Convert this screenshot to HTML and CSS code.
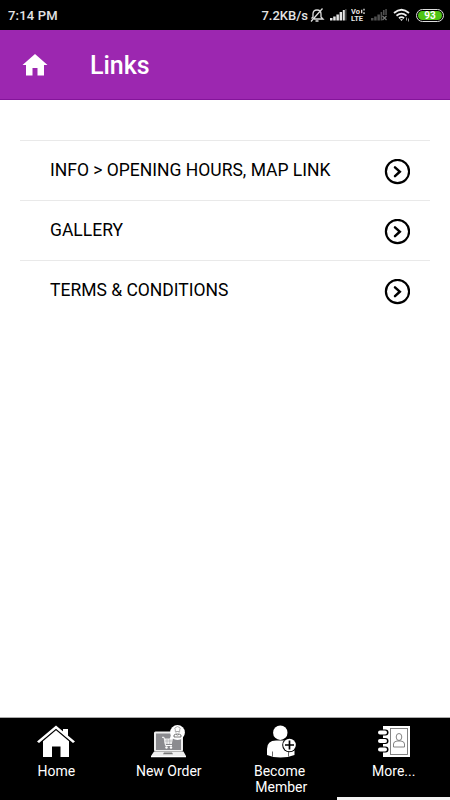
FILE: index.html
```html
<!DOCTYPE html>
<html lang="en">
<head>
  <meta charset="UTF-8">
  <meta name="viewport" content="width=device-width, initial-scale=1.0">
  <title>Links</title>
  <link rel="stylesheet" href="styles.css">
</head>
<body>

  <!-- Status Bar -->
  <div class="status-bar">
    <span class="time">7:14 PM</span>
    <span class="speed">7.2KB/s</span>
    <svg class="bell" width="16" height="14" viewBox="0 0 16 14" fill="none" stroke="#ddd" stroke-width="1.3">
      <path d="M2.500 10.500 L4 9 V6 Q4 2 8 2 Q12 2 12 6 V9 L14 11 H5 M6.500 13 H9.500 M13.500 .5 L2 13.500"/>
    </svg>
    <svg class="signal" width="17" height="12" viewBox="0 0 17 12" fill="#e6e6e6">
      <path d="M0 9h2.500v2.500H0zM3.200 7.500h2.500v4H3.200zM6.400 5.500h2.500v6H6.400zM9.600 3h2.500v8.500H9.600z"/>
      <path d="M12.800 1h2v10.500h-2z"/>
      <path fill="#555" d="M15.200 0h1.300v11.500h-1.300z"/>
    </svg>
    <svg class="volte" width="15" height="14" viewBox="0 0 15 14" fill="#e6e6e6">
      <text x="0" y="6">Vo</text>
      <text x="0" y="13.200">LTE</text>
      <path d="M10.700 1.800v3.500M13 0.800v1.800M13 4.200v1.800" stroke="#e6e6e6" stroke-width="1.300"/>
    </svg>
    <svg class="signal-off" width="17" height="12" viewBox="0 0 17 12" fill="#505050">
      <path d="M0 9h2.500v2.500H0zM3.200 7.500h2.500v4H3.200zM6.400 5.500h2.500v6H6.400zM9.600 3h1.600v8.500H9.600zM12 1h1.600v5H12zM14.300 0h1.500v6h-1.500z"/>
      <path d="M11.500 7 L15.500 11 M15.500 7 L11.500 11" stroke="#777" stroke-width="1.2"/>
    </svg>
    <svg class="wifi" width="18" height="14" viewBox="0 0 18 14" fill="none" stroke="#eee" stroke-width="1.800">
      <path d="M1 5 Q8.500 -1.500 16 5M3.500 7.700 Q8.500 3.500 13.500 7.700M6 10.200 Q8.500 8 11 10.200"/>
      <path d="M7 11.200 L8.500 13 L10 11.200z" fill="#eee" stroke="none"/>
      <path d="M13.500 9.500v3M15.500 10.500v3" stroke="#999" stroke-width="1"/>
    </svg>
    <span class="battery"><b>93</b></span>
  </div>

  <!-- Header -->
  <header class="header">
    <svg class="header-home" width="26" height="22" viewBox="0 0 26 22" fill="#fff">
      <path d="M13 0 L25.500 11 H22 V21.500 H15.500 V14 H10.500 V21.500 H4 V11 H0.500z"/>
    </svg>
    <h1>Links</h1>
  </header>

  <!-- Links List -->
  <main>
    <ul class="links">
      <li>
        <span>INFO &gt; OPENING HOURS, MAP LINK</span>
        <svg width="26" height="26" viewBox="0 0 26 26" fill="none" stroke="#000">
          <circle cx="13.500" cy="12.500" r="11.600" stroke-width="2.200"/>
          <path d="M11 8.300 L15.800 12.700 L11 17.100" stroke-width="2.500" stroke-linecap="round"/>
        </svg>
      </li>
      <li>
        <span>GALLERY</span>
        <svg width="26" height="26" viewBox="0 0 26 26" fill="none" stroke="#000">
          <circle cx="13.500" cy="12.500" r="11.600" stroke-width="2.200"/>
          <path d="M11 8.300 L15.800 12.700 L11 17.100" stroke-width="2.500" stroke-linecap="round"/>
        </svg>
      </li>
      <li>
        <span>TERMS &amp; CONDITIONS</span>
        <svg width="26" height="26" viewBox="0 0 26 26" fill="none" stroke="#000">
          <circle cx="13.500" cy="12.500" r="11.600" stroke-width="2.200"/>
          <path d="M11 8.300 L15.800 12.700 L11 17.100" stroke-width="2.500" stroke-linecap="round"/>
        </svg>
      </li>
    </ul>
  </main>

  <!-- Bottom Navigation -->
  <nav class="bottom-nav">
    <div class="nav-item">
      <svg width="40" height="34" viewBox="0 0 40 34" fill="#fff">
        <path d="M20 0.500 L39 16.500 L37 18 L20 3.700 L3 18 L1 16.500z"/>
        <path d="M27 4h5v7.500l-5-4.300z"/>
        <path d="M20 5.200 L33 16.200 V32 H24.500 V21.500 H16 V32 H7 V16.200z"/>
      </svg>
      <span>Home</span>
    </div>
    <div class="nav-item">
      <svg width="40" height="34" viewBox="0 0 40 34">
        <rect x="5" y="6.500" width="29" height="20" rx="1.500" fill="#eee"/>
        <rect x="7" y="8.500" width="25" height="16.500" fill="#8b8b8f"/>
        <path d="M5 26.500h29.500l2.500 4.500H2z" fill="#eee"/>
        <path d="M15 27.500h8l1 1.700H14z" fill="#777"/>
        <path d="M2 31h35v1.200H2z" fill="#fff"/>
        <path d="M13 12.300h2l1.500 8.200h6.500" fill="none" stroke="#fff"/>
        <path d="M15 13.500h9l-1.200 5.500h-6.800z" fill="#eee"/>
        <path d="M15.500 16h8M18 14v5M20.700 14v5" stroke="#8b8b8f" stroke-width=".4"/>
        <circle cx="17.500" cy="22.500" r="1.200" fill="#fff"/>
        <circle cx="22" cy="22.500" r="1.200" fill="#fff"/>
        <path d="M22 10 L20.500 14.500 L28 13z" fill="#fff"/>
        <circle cx="28.500" cy="7.500" r="7.400" fill="#fff"/>
        <g fill="none" stroke="#888" stroke-width=".7">
          <path d="M26.300 6.500V4.700q-1.500-2 .7-2.400 1.500-1.500 3 0 2.200.4.700 2.400v1.800zM26.500 7.700q2 2 4 0"/>
          <path d="M25 10q1.500-1.500 3.500 0 2-1.500 3.500 0v2h-7z" stroke="#444"/>
        </g>
      </svg>
      <span>New Order</span>
    </div>
    <div class="nav-item">
      <svg width="40" height="34" viewBox="0 0 40 34">
        <circle cx="19.300" cy="7.700" r="7.200" fill="#fff"/>
        <path d="M6 30 V24 Q6 15.500 15 15.500 H25 Q32.500 16 33.500 24 V30 Q27 32.500 19.500 32.500 T6 30z" fill="#fff"/>
        <path d="M11.500 26.500v5M27.500 26.500v5" stroke="#000" stroke-width=".6"/>
        <circle cx="28.500" cy="20" r="7.300" fill="#000"/>
        <circle cx="28.500" cy="20" r="6.300" fill="#fff"/>
        <path d="M24 20h9M28.500 15.500v9" stroke="#000" stroke-width="1.700"/>
      </svg>
      <span class="member">Become <br>Member</span>
    </div>
    <div class="nav-item">
      <svg width="40" height="34" viewBox="0 0 40 34">
        <rect x="9" y="1" width="27" height="31" fill="#fff"/>
        <rect x="16.500" y="3.500" width="17" height="26" fill="none" stroke="#777" stroke-width=".9"/>
        <g stroke="#777" fill="none" stroke-width=".9">
          <ellipse cx="25" cy="12" rx="2.800" ry="3.500"/>
          <path d="M19.500 22v-3q0-2.500 3.500-3h4q3.500.5 3.500 3v3z"/>
        </g>
        <g fill="#000">
          <rect x="3" y="4.500" width="11.500" height="6" rx="3"/>
          <rect x="3" y="13" width="11.500" height="6" rx="3"/>
          <rect x="3" y="21.500" width="11.500" height="6" rx="3"/>
        </g>
        <g fill="#fff">
          <rect x="4" y="5.500" width="9" height="4" rx="2"/>
          <rect x="4" y="14" width="9" height="4" rx="2"/>
          <rect x="4" y="22.500" width="9" height="4" rx="2"/>
        </g>
      </svg>
      <span>More...</span>
    </div>
    <div class="bottom-strip"></div>
  </nav>

</body>
</html>
```
FILE: styles.css
```css
/* General Reset */
* {
  margin: 0;
  padding: 0;
  box-sizing: border-box;
}

body {
  display: flex;
  flex-direction: column;
  height: 100vh;
  overflow: hidden;
  font-family: Roboto, sans-serif;
  background: #fff;
  color: #000;
}

svg {
  display: block;
  flex: none;
}

/* Status Bar */
.status-bar {
  display: flex;
  align-items: center;
  flex: none;
  height: 30px;
  padding: 0 6px 0 8px;
  background: #000;
  color: #e4e4e4;
  font-size: 13px;
  font-weight: 500;
}

.time {
  letter-spacing: 0.2px;
}

.speed {
  margin-left: auto;
}

.bell {
  margin-left: 1px;
}

.signal {
  margin-left: 5px;
}

.volte {
  margin-left: 4px;
  font-size: 7.5px;
  font-weight: 700;
}

.signal-off {
  margin-left: 5px;
}

.wifi {
  margin-left: 5px;
}

.battery {
  width: 28px;
  height: 13px;
  margin-left: 5px;
  padding: 1px;
  border: 1px solid #ddd;
  border-radius: 7px;
}

.battery b {
  display: block;
  height: 9px;
  border-radius: 5px;
  background: #4fc414;
  color: #fff;
  font-size: 10px;
  line-height: 9px;
  text-align: center;
}

/* Header */
.header {
  display: flex;
  align-items: center;
  flex: none;
  height: 70px;
  padding-left: 22px;
  border-bottom: 1px solid #84149a;
  background: #9c27b0;
  color: #fff;
}

.header h1 {
  margin-left: 42px;
  padding-top: 2px;
  font-size: 25px;
  font-weight: 500;
}

/* Links List */
main {
  flex: 1;
  padding: 40px 20px 0;
}

.links {
  list-style: none;
}

.links li {
  display: flex;
  justify-content: space-between;
  height: 60px;
  padding: 18px 20px 0 30px;
  border-top: 1px solid #e9e9e9;
  font-size: 17.5px;
  line-height: 22px;
}

/* Bottom Navigation */
.bottom-nav {
  position: relative;
  display: grid;
  grid-template-columns: repeat(4, 1fr);
  flex: none;
  height: 83px;
  padding-top: 7px;
  border-top: 1px solid #aaa;
  background: #000;
  color: #fff;
  font-size: 14px;
  line-height: 16px;
  text-align: center;
}

.nav-item {
  display: flex;
  flex-direction: column;
  align-items: center;
  gap: 4px;
}

.member {
  white-space: pre;
}

.bottom-strip {
  position: absolute;
  right: 0;
  bottom: 0;
  width: 113px;
  height: 3px;
  background: #f4f4f4;
}
```
